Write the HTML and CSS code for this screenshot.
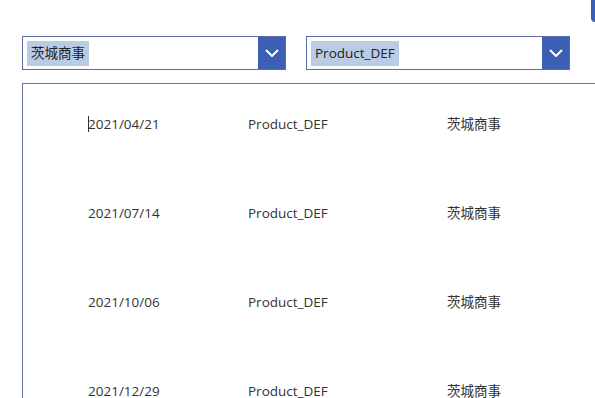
FILE: index.html
```html
<!DOCTYPE html>
<html lang="ja">
<head>
  <meta charset="UTF-8">
  <title>ギャラリー</title>
  <link rel="stylesheet" href="styles.css">
</head>
<body>
  <div class="corner-tab"></div>
  <div class="filters">
    <div class="dropdown">
      <span class="dropdown-value">茨城商事</span>
      <span class="dropdown-btn">
        <svg width="14" height="8" viewBox="0 0 14 8"><path d="M1 1 L7 7 L13 1" fill="none" stroke="#fff" stroke-width="2"/></svg>
      </span>
    </div>
    <div class="dropdown">
      <span class="dropdown-value">Product_DEF</span>
      <span class="dropdown-btn">
        <svg width="14" height="8" viewBox="0 0 14 8"><path d="M1 1 L7 7 L13 1" fill="none" stroke="#fff" stroke-width="2"/></svg>
      </span>
    </div>
  </div>

  <div class="gallery">
    <div class="row">
      <span class="col-date"><span class="caret"></span>2021/04/21</span>
      <span class="col-product">Product_DEF</span>
      <span class="col-client">茨城商事</span>
    </div>
    <div class="row">
      <span class="col-date">2021/07/14</span>
      <span class="col-product">Product_DEF</span>
      <span class="col-client">茨城商事</span>
    </div>
    <div class="row">
      <span class="col-date">2021/10/06</span>
      <span class="col-product">Product_DEF</span>
      <span class="col-client">茨城商事</span>
    </div>
    <div class="row">
      <span class="col-date">2021/12/29</span>
      <span class="col-product">Product_DEF</span>
      <span class="col-client">茨城商事</span>
    </div>
  </div>
</body>
</html>
```
FILE: styles.css
```css
body {
  margin: 0;
  background-color: #fff;
  font-family: "Open Sans", "Noto Sans CJK JP", sans-serif;
  font-size: 13.5px;
  color: #333;
  overflow: hidden;
  height: 398px;
}
.corner-tab {
  position: absolute;
  top: -6px;
  left: 591px;
  width: 4px;
  height: 28px;
  background-color: #3a5fb5;
  border-radius: 5px 0 0 5px;
}
.filters {
  display: flex;
  gap: 20px;
  padding: 36px 0 0 22px;
}
.dropdown {
  display: flex;
  width: 262px;
  height: 32px;
  border: 1px solid #5d6aa9;
  background-color: #fff;
}
.dropdown-value {
  align-self: center;
  margin-left: 4px;
  padding: 0 4px;
  height: 25px;
  line-height: 25px;
  background-color: #bacbe6;
  color: #222;
}
.dropdown-btn {
  margin-left: auto;
  width: 27px;
  background-color: #3a5fb5;
  display: flex;
  align-items: center;
  justify-content: center;
}
.gallery {
  margin: 13px 0 0 22px;
  width: 573px;
  height: 314px;
  overflow: hidden;
  border-top: 1px solid #6670a8;
  border-left: 1px solid #6670a8;
}
.row {
  display: flex;
  height: 89px;
  padding-left: 65px;
  padding-top: 31px;
  box-sizing: border-box;
  line-height: 18px;
}
.col-date {
  position: relative;
  width: 160px;
}
.col-product {
  width: 199px;
}
.caret {
  position: absolute;
  left: 0;
  top: 1px;
  width: 1px;
  height: 16px;
  background-color: #333;
}
```
